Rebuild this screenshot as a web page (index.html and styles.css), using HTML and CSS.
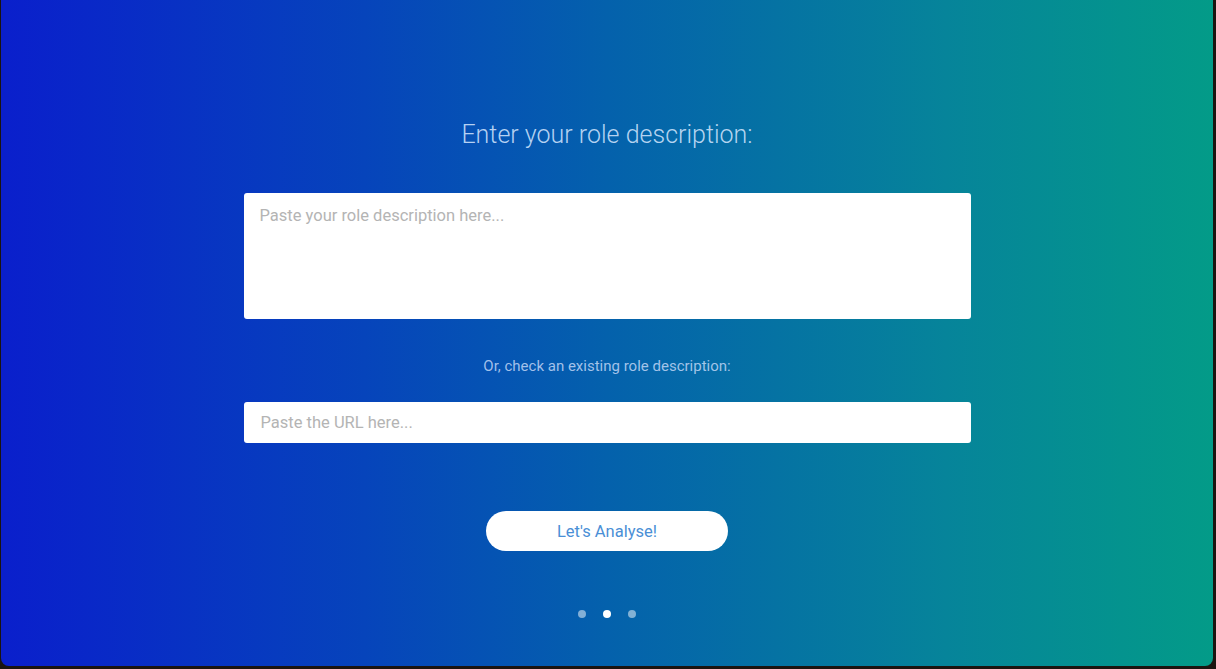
FILE: index.html
```html
<!DOCTYPE html>
<html lang="en">
<head>
<meta charset="utf-8">
<title>Role description</title>
<link rel="stylesheet" href="styles.css">
</head>
<body>
<div class="app">
  <main class="content">
    <h1 class="title">Enter your role description:</h1>
    <textarea class="desc" placeholder="Paste your role description here..."></textarea>
    <p class="label">Or, check an existing role description:</p>
    <input class="url" type="text" placeholder="Paste the URL here...">
    <button class="analyse" type="button">Let's Analyse!</button>
    <div class="dots">
      <span class="dot"></span>
      <span class="dot active"></span>
      <span class="dot"></span>
    </div>
  </main>
</div>
</body>
</html>
```
FILE: styles.css
```css
html, body {
  margin: 0;
  padding: 0;
  background: #1b1410;
  height: 100%;
  overflow: hidden;
}
.app {
  width: 1212px;
  height: 666px;
  margin-left: 1px;
  border-radius: 0 0 8px 8px;
  background: linear-gradient(90deg, #0a1fcc 0%, #0644bb 30%, #0461ac 50%, #06849a 78%, #039b88 100%);
  font-family: Roboto, "Noto Sans", sans-serif;
  overflow: hidden;
}
.content {
  width: 727px;
  margin: 0 auto;
  padding-top: 118px;
  display: flex;
  flex-direction: column;
  align-items: center;
}
.title {
  margin: 0;
  font-size: 25px;
  line-height: 34px;
  font-weight: 300;
  color: rgba(215, 232, 255, 0.85);
}
.desc {
  box-sizing: border-box;
  margin-top: 41px;
  width: 727px;
  height: 126px;
  border: none;
  border-radius: 3px;
  background: #fff;
  padding: 13px 16px;
  font-family: Roboto, "Noto Sans", sans-serif;
  font-size: 16.5px;
  line-height: 20px;
  resize: none;
  outline: none;
}
.desc::placeholder, .url::placeholder {
  color: #b4b4b4;
}
.label {
  margin: 37px 0 0;
  font-size: 15px;
  line-height: 20px;
  font-weight: 400;
  color: rgba(200, 218, 248, 0.82);
}
.url {
  box-sizing: border-box;
  margin-top: 26px;
  width: 727px;
  height: 41px;
  border: none;
  border-radius: 3px;
  background: #fff;
  padding: 0 17px;
  font-family: Roboto, "Noto Sans", sans-serif;
  font-size: 16.5px;
  outline: none;
}
.analyse {
  margin-top: 68px;
  width: 242px;
  height: 40px;
  border: none;
  border-radius: 20px;
  background: #fff;
  color: #4a8fd6;
  font-family: Roboto, "Noto Sans", sans-serif;
  font-size: 16.5px;
  cursor: pointer;
}
.dots {
  margin-top: 59px;
  display: flex;
  gap: 17px;
}
.dot {
  width: 8px;
  height: 8px;
  border-radius: 50%;
  background: rgba(255, 255, 255, 0.5);
}
.dot.active {
  background: #fff;
}
```
